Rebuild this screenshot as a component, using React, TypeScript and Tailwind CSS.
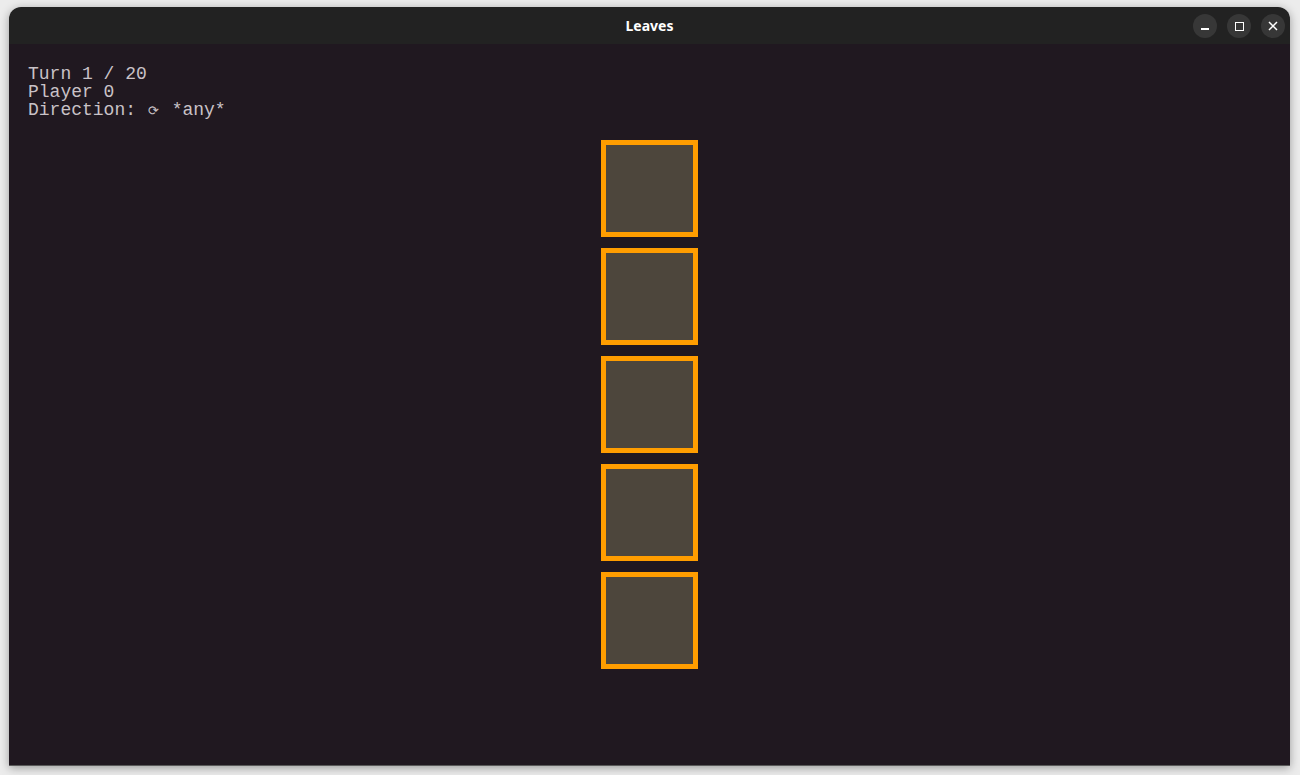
import React from "react";

export default function App() {
  const boxes = [0, 1, 2, 3, 4];
  return (
    <div className="w-[1300px] h-[775px] bg-[#ececec] pt-[7px] pl-[9px] overflow-hidden">
      <div className="w-[1281px] h-[759px] flex flex-col rounded-t-[12px] overflow-hidden shadow-[0_2px_10px_rgba(0,0,0,0.35)] border-b border-[#5a5a5a]">
        <div className="h-[37px] bg-[#222222] flex items-center relative shrink-0">
          <div className="flex-1 text-center text-white text-[14px] font-bold" style={{ fontFamily: '"Noto Sans", "Open Sans", sans-serif' }}>
            Leaves
          </div>
          <div className="absolute right-[5px] top-[7px] flex gap-[10px]">
            <div className="w-[24px] h-[24px] rounded-full bg-[#373737] flex items-center justify-center">
              <div className="w-[8px] h-[1.5px] bg-white mt-[6px]" />
            </div>
            <div className="w-[24px] h-[24px] rounded-full bg-[#373737] flex items-center justify-center">
              <div className="w-[9px] h-[9px] border-[1.5px] border-white" />
            </div>
            <div className="w-[24px] h-[24px] rounded-full bg-[#373737] flex items-center justify-center">
              <svg width="10" height="10" viewBox="0 0 10 10">
                <path d="M1 1 L9 9 M9 1 L1 9" stroke="white" strokeWidth="1.5" />
              </svg>
            </div>
          </div>
        </div>
        <div className="flex-1 bg-[#201820] relative">
          <div
            className="pt-[21px] pl-[19px] text-[18px] leading-[18px] text-[#c9c2c7] whitespace-pre"
            style={{ fontFamily: '"Liberation Mono", "DejaVu Sans Mono", monospace' }}
          >
            <div>Turn 1 / 20</div>
            <div>Player 0</div>
            <div>
              Direction: <span className="inline-block w-[14px] text-left pl-[1px] text-[13px]">⟳</span> *any*
            </div>
          </div>
          <div className="flex flex-col items-center gap-[11px] mt-[19px]">
            {boxes.map((b) => (
              <div key={b} className="w-[97px] h-[97px] border-[5px] border-[#ff9d00] bg-[#4d463c]" />
            ))}
          </div>
        </div>
      </div>
    </div>
  );
}
